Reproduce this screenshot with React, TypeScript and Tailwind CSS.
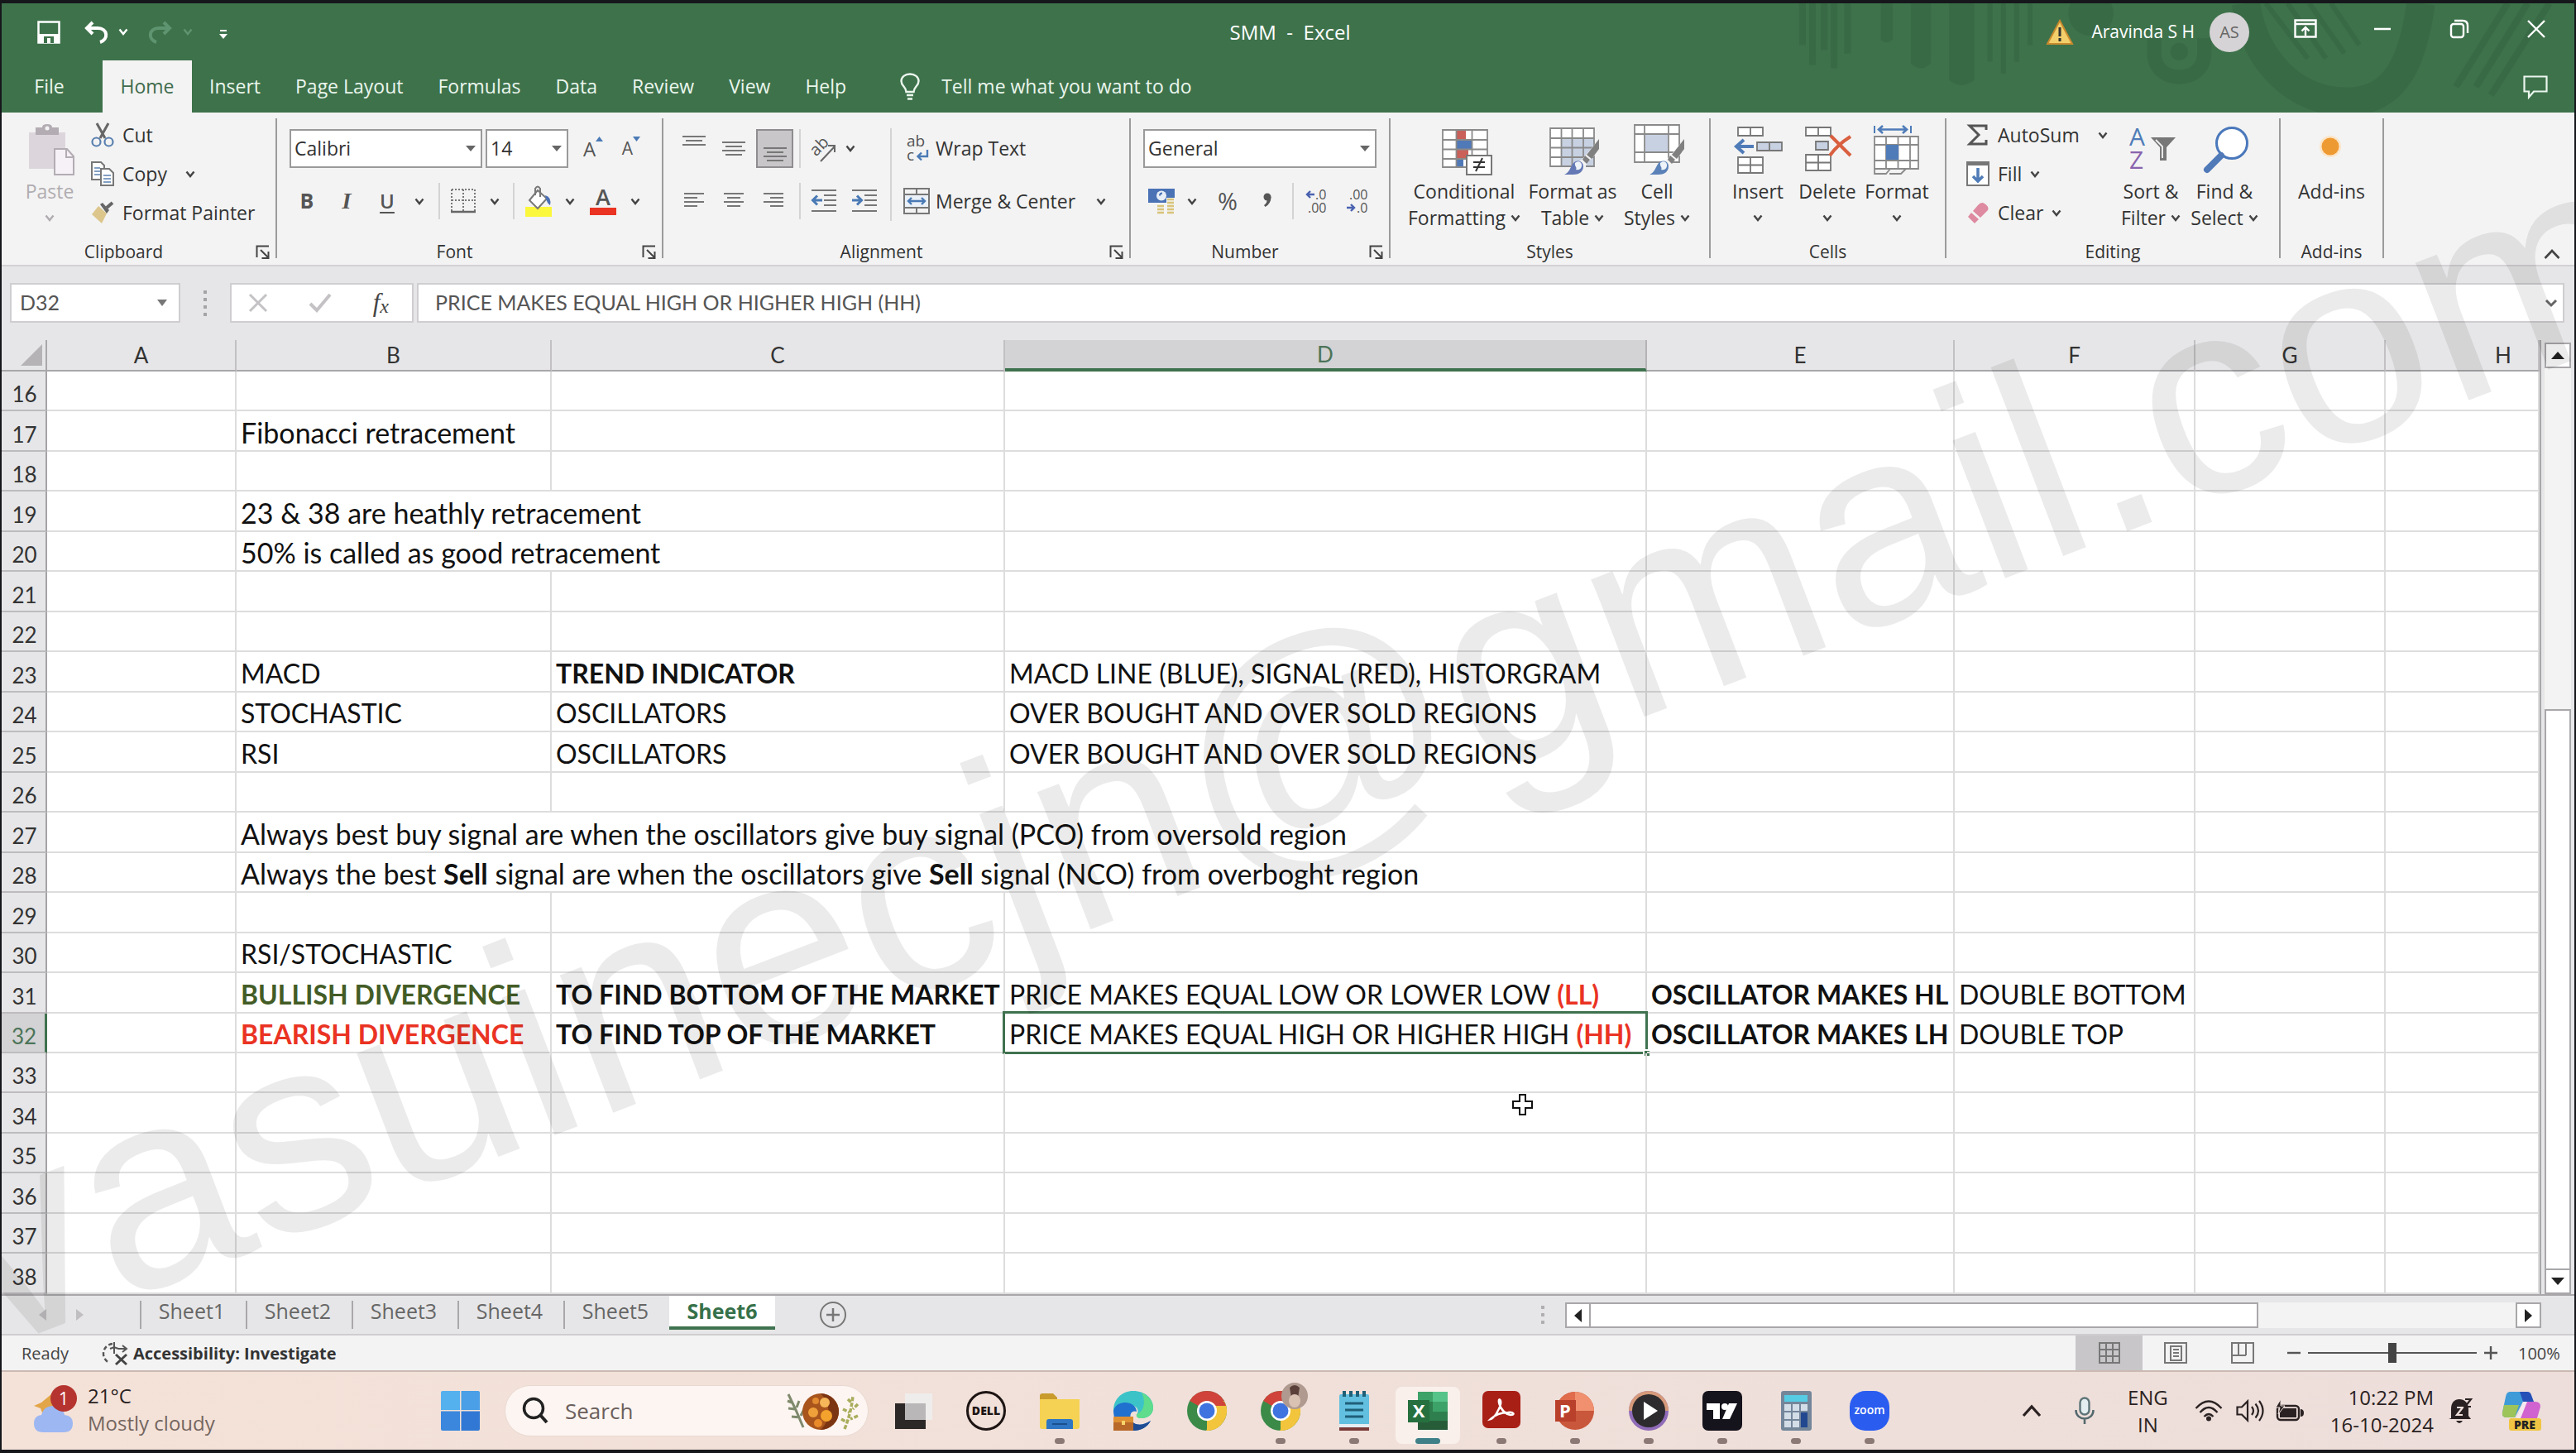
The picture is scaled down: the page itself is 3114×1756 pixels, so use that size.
import React from "react";
import type { ReactNode } from "react";

/* ---------- small shared pieces ---------- */

function Svg({ w, h, children, className }: { w: number; h: number; children: ReactNode; className?: string }) {
  return (
    <svg width={w} height={h} viewBox={`0 0 ${w} ${h}`} fill="none" aria-hidden="true" className={`shrink-0 overflow-visible ${className ?? ""}`}>
      {children}
    </svg>
  );
}

function Chevron({ className = "text-[#444]" }: { className?: string }) {
  return (
    <Svg w={12} h={9} className={className}>
      <path d="M1.500 1.500 6 7l4.500-5.500" stroke="currentColor" strokeWidth="2.400" />
    </Svg>
  );
}

function Btn({ label, className = "", children, pressed }: { label?: string; className?: string; children: ReactNode; pressed?: boolean }) {
  return (
    <button type="button" aria-label={label} aria-pressed={pressed} className={`flex shrink-0 items-center justify-center ${className}`}>
      {children}
    </button>
  );
}

function Sep({ className = "" }: { className?: string }) {
  return <div className={`w-[2px] shrink-0 bg-[#d4d4d4] ${className}`} />;
}

function Group({ title, className, launcher, children }: { title: string; className: string; launcher?: boolean; children: ReactNode }) {
  return (
    <>
      <section aria-label={title} className={`flex h-[177px] shrink-0 flex-col ${className}`}>
        <div className="flex min-h-0 flex-1">{children}</div>
        <div className={`relative flex h-8 items-center justify-center pt-0.5 text-[21px] text-[#333] ${launcher ? "pr-9" : ""}`}>
          {title}
          {launcher && (
            <button type="button" aria-label={`${title} settings`} className="absolute right-1.5 top-2">
              <Svg w={18} h={18}>
                <path d="M1.500 15V1.500H16M6 6l9 9M15.500 8v8H7.500" stroke="#444" strokeWidth="2" />
              </Svg>
            </button>
          )}
        </div>
      </section>
      <div className="h-[169px] w-[2px] shrink-0 bg-[#9b9b9b]" />
    </>
  );
}

function Big({ icon, line1, line2, chev, className, muted }: { icon: ReactNode; line1: string; line2?: string; chev?: boolean; className: string; muted?: boolean }) {
  return (
    <button type="button" className={`flex shrink-0 flex-col items-center whitespace-nowrap pt-1.5 leading-8 ${muted ? "text-[#b0acb0]" : ""} ${className}`}>
      <span className="mb-0.5 flex h-16 items-center justify-center">{icon}</span>
      <span>{line1}</span>
      <span className="flex h-8 items-center gap-1.5">
        {line2}
        {chev && <Chevron className={muted ? "text-[#b0acb0]" : "text-[#444]"} />}
      </span>
    </button>
  );
}

function Combo({ label, value, className }: { label: string; value: string; className: string }) {
  return (
    <label className={`relative block h-[47px] shrink-0 ${className}`}>
      <span className="sr-only">{label}</span>
      <select className="h-full w-full appearance-none border-2 border-[#9a9a9a] bg-white pl-1 text-[#333]" defaultValue={value}>
        <option>{value}</option>
      </select>
      <Svg w={12} h={7} className="pointer-events-none absolute right-2 top-5">
        <path d="M0 0h12L6 7z" fill="#666" />
      </Svg>
    </label>
  );
}

/* ---------- title bar and tabs ---------- */

function TitlePattern() {
  return (
    <svg aria-hidden="true" viewBox="0 0 960 131" preserveAspectRatio="xMaxYMin slice" className="pointer-events-none absolute right-0 top-0 h-full w-[960px]">
      <g fill="#376543" opacity="0.6">
        <path d="M30 0h8v50h-8zM42 0h8v74h-8zM56 0h8v56h-8zM68 0h8v78h-8zM84 0h8v60h-8zM128 0h14v44q-7 6-14 0zM164 0h24v72q-12 12-24 0zM210 0h30v92q-15 12-30 0zM256 0h6v70h-6zM272 0h6v84h-6zM288 0h6v70h-6zM304 0h6v50h-6z" />
        <circle cx="380" cy="12" r="27" />
      </g>
      <g stroke="#376543" fill="none" opacity="0.6">
        <path d="M456 42v18c0 38 60 38 60 0V42" strokeWidth="17" />
        <circle cx="486" cy="58" r="10" fill="#376543" />
        <path d="M566 0c10 70 60 118 120 118S766 70 776 0" strokeWidth="34" />
        <path d="M590 0l50 66M616 0l46 66M642 0l42 60M668 0l34 50" strokeWidth="6" />
        <path d="M880 0l-62 100M904 0l-62 100M930 0l-70 110" strokeWidth="8" />
      </g>
    </svg>
  );
}

function TitleBar() {
  return (
    <div className="relative flex h-[69px] items-center text-white">
      <div className="flex flex-1 items-center pl-[43px]">
        <Btn label="Save">
          <Svg w={28} h={28}>
            <path d="M1.500 1.500h25v25h-25z" stroke="#fff" strokeWidth="2.500" />
            <path d="M2 16h24v10H2z" fill="#fff" />
            <path d="M8 19h12v8H8z" fill="#3e724b" />
            <path d="M12 21h4v6h-4z" fill="#fff" />
          </Svg>
        </Btn>
        <Btn label="Undo" className="ml-7">
          <Svg w={30} h={26}>
            <path d="M11 1 4 8l7 7M5 8h12c13 0 13 14 3 17" stroke="#fff" strokeWidth="4" />
          </Svg>
        </Btn>
        <Btn label="Undo options" className="ml-3">
          <Chevron className="text-white" />
        </Btn>
        <Btn label="Redo" className="ml-6">
          <Svg w={30} h={26}>
            <path d="m19 1 7 7-7 7M25 8H13C0 8 0 22 10 25" stroke="#5f9470" strokeWidth="4" />
          </Svg>
        </Btn>
        <Btn label="Redo options" className="ml-3">
          <Chevron className="text-[#5f9470]" />
        </Btn>
        <Btn label="Customize Quick Access Toolbar" className="ml-8 mt-1.5">
          <Svg w={10} h={11}>
            <path d="M1 1h8" stroke="#fff" strokeWidth="2" />
            <path d="M0 5h10l-5 6z" fill="#fff" />
          </Svg>
        </Btn>
      </div>
      <h1 className="whitespace-pre pr-1 text-[24px]">SMM  -  Excel</h1>
      <div className="flex flex-1 items-center justify-end pr-[34px]">
        <Svg w={32} h={30}>
          <path d="M16 1 31 29H1z" fill="#f3cf6b" stroke="#c98a2e" strokeWidth="2" />
          <path d="M16 9v11M16 22v4" stroke="#333" strokeWidth="3" />
        </Svg>
        <span className="ml-[22px] text-[21px]">Aravinda S H</span>
        <Btn label="Account" className="ml-[18px] size-12 rounded-full bg-[#d5d3d5] text-[20px] text-[#666]">
          AS
        </Btn>
        <Btn label="Ribbon display options" className="mb-2 ml-[54px]">
          <Svg w={28} h={23}>
            <path d="M1.500 1.500h25v20h-25zM2 6h24M14 20v-9M9.500 14.500 14 10l4.500 4.500" stroke="#fff" strokeWidth="2.400" />
          </Svg>
        </Btn>
        <Btn label="Minimize" className="mb-2 ml-[68px]">
          <Svg w={22} h={24}>
            <path d="M1 12h20" stroke="#fff" strokeWidth="2.500" />
          </Svg>
        </Btn>
        <Btn label="Restore" className="mb-2 ml-[70px]">
          <Svg w={24} h={24}>
            <rect x="2" y="6" width="15" height="16" rx="3" stroke="#fff" strokeWidth="2.400" />
            <path d="M6 2h10q6 0 6 6v9" stroke="#fff" strokeWidth="2.400" />
          </Svg>
        </Btn>
        <Btn label="Close" className="mb-2 ml-[69px]">
          <Svg w={24} h={24}>
            <path d="m2 2 20 20M22 2 2 22" stroke="#fff" strokeWidth="2.400" />
          </Svg>
        </Btn>
      </div>
    </div>
  );
}

const MENU = ["Insert", "Page Layout", "Formulas", "Data", "Review", "View", "Help"];

function MenuTabs() {
  return (
    <nav aria-label="Ribbon tabs" className="relative flex h-[63px] items-stretch text-[23px] text-[#eaf6ed]">
      <button type="button" className="w-[115px] text-center">File</button>
      <button type="button" className="ml-[7px] w-[108px] bg-[#f3f3f3] text-[#3f6b4c]">Home</button>
      {MENU.map((m) => (
        <button key={m} type="button" className="whitespace-nowrap px-[21px]">
          {m}
        </button>
      ))}
      <label className="ml-11 flex items-center gap-[26px]">
        <Svg w={24} h={34}>
          <path d="M7.500 23c0-6-6-7-6-13C1.500 5 6 1.500 12 1.500S22.500 5 22.500 10c0 6-6 7-6 13zM8 27h8M9 31.500h6" stroke="#eaf6ed" strokeWidth="2.400" />
        </Svg>
        <input aria-label="Tell me what you want to do" placeholder="Tell me what you want to do" className="w-[400px] bg-transparent placeholder:text-[#eaf6ed] placeholder:opacity-100" />
      </label>
      <Btn label="Comments" className="ml-auto mr-8">
        <Svg w={30} h={28}>
          <path d="M1.500 1.500h27v18H13l-6 7v-7H1.500z" stroke="#eaf6ed" strokeWidth="2.200" />
        </Svg>
      </Btn>
    </nav>
  );
}

/* ---------- ribbon ---------- */

function Lines({ rows, top = 0 }: { rows: [number, number][]; top?: number }) {
  return (
    <Svg w={30} h={34}>
      {rows.map(([x, len], i) => (
        <path key={i} d={`M${x} ${top + 2 + i * 5}h${len}`} stroke="#777" strokeWidth="2" />
      ))}
    </Svg>
  );
}

function IndentIcon({ dir }: { dir: "in" | "out" }) {
  return (
    <Svg w={30} h={30}>
      <path d="M0 2h30M15 8h15M15 14h15M15 20h15M0 27h30" stroke="#777" strokeWidth="2" />
      <path d={dir === "out" ? "M13 14H2M7 8.500 1.500 14 7 19.500" : "M0 14h11M6 8.500 11.500 14 6 19.500"} stroke="#4a7ab5" strokeWidth="3" />
    </Svg>
  );
}

function Brush({ x, y, fill = "#5b82b8" }: { x: number; y: number; fill?: string }) {
  return (
    <g transform={`translate(${x} ${y})`}>
      <path d="M46-3 22 25l-8 4-14 17h17q11-3 10-14l3-5L46 12z" fill="#f3f3f3" />
      <path d="M43 0v12L34 24l-6-5z" fill="#808080" />
      <path d="m26 20 6 5-4 5-5-5z" fill="#808080" />
      <path d="M1 43c7-3 7-9 11-14 5-5 12-2 12 4 0 7-6 10-12 10z" fill={fill} />
      <path d="M14 29c4-4 9-1 8 4-1 4-4 5-7 4 2-3-2-4-1-8z" fill="#eef3f9" />
    </g>
  );
}

function ClipboardGroup() {
  return (
    <Group title="Clipboard" launcher className="w-[331px]">
      <Big
        muted
        chev
        line1="Paste"
        className="ml-5 w-[76px]"
        icon={
          <Svg w={56} h={62} className="ml-1">
            <path d="M1 10h44v44H1z" fill="#dcd6dc" />
            <path d="M9 4h8q0-4 6-4t6 4h8v9H9z" fill="#b3adb3" />
            <circle cx="23" cy="5" r="2.500" fill="#f3f3f3" />
            <path d="M32 30h15l8 9v22H32z" fill="#f6f1f6" stroke="#b3adb3" strokeWidth="2" />
            <path d="M46 30v10h9" stroke="#b3adb3" strokeWidth="2" />
          </Svg>
        }
      />
      <div className="flex flex-col gap-[7px]">
        <button type="button" className="ml-3 flex h-10 items-center gap-2.5">
          <Svg w={28} h={29}>
            <path d="M7 0 17 18M21 0 11 18" stroke="#666" strokeWidth="3" />
            <circle cx="6.500" cy="22.500" r="5" stroke="#5a80b0" strokeWidth="2.200" />
            <circle cx="21.500" cy="22.500" r="5" stroke="#5a80b0" strokeWidth="2.200" />
          </Svg>
          Cut
        </button>
        <button type="button" className="ml-3 flex h-10 items-center gap-2.5">
          <Svg w={28} h={30}>
            <path d="M1 1h11l4 4v17H1z" fill="#fff" stroke="#777" strokeWidth="2" />
            <path d="M4 8h7M4 12h7M4 16h7" stroke="#5a80b0" strokeWidth="1.600" />
            <path d="M12 9h10l5 5v15H12z" fill="#fff" stroke="#777" strokeWidth="2" />
            <path d="M15 17h9M15 21h9M15 25h9" stroke="#5a80b0" strokeWidth="1.600" />
          </Svg>
          Copy
          <span className="ml-3">
            <Chevron />
          </span>
        </button>
        <button type="button" className="ml-3 flex h-10 items-center gap-2.5 whitespace-nowrap">
          <Svg w={28} h={28}>
            <path d="m9 6 10 9-6 12L1 16z" fill="#dcc68c" />
            <path d="m11 4 3-2 8 9-3 4z" fill="#666" />
            <path d="M19 8 26 2" stroke="#666" strokeWidth="4" />
          </Svg>
          Format Painter
        </button>
      </div>
    </Group>
  );
}

function FontGroup() {
  return (
    <Group title="Font" launcher className="w-[465px]">
      <div className="flex flex-col gap-[18px] pt-[13px]">
        <div className="flex items-center pl-[15px]">
          <Combo label="Font" value="Calibri" className="w-[233px]" />
          <Combo label="Font size" value="14" className="ml-1 w-[100px]" />
          <Btn label="Increase font size" className="ml-1.5 w-12 text-[24px] text-[#555]">
            A
            <Svg w={9} h={6} className="mb-6">
              <path d="M0 6 4.500 0 9 6z" fill="#4a7ab5" />
            </Svg>
          </Btn>
          <Btn label="Decrease font size" className="w-11 text-[21px] text-[#555]">
            A
            <Svg w={9} h={6} className="mb-6">
              <path d="M0 0h9L4.500 6z" fill="#4a7ab5" />
            </Svg>
          </Btn>
        </div>
        <div className="flex h-11 items-stretch pl-[13px] text-[#555]">
          <Btn className="w-[46px] text-[25px] font-bold">B</Btn>
          <Btn className="w-[50px] font-['Liberation_Serif'] text-[28px] font-bold italic">I</Btn>
          <Btn className="w-12 text-[24px] font-semibold underline underline-offset-4">U</Btn>
          <Btn label="Underline options" className="w-[30px]"><Chevron /></Btn>
          <Sep className="ml-2" />
          <Btn label="Borders" className="w-14">
            <Svg w={30} h={30}>
              <path d="M1 1h28v26M1 1v26M15 1v26M1 14h28" stroke="#777" strokeWidth="2" strokeDasharray="2 2" />
              <path d="M0 28h30" stroke="#666" strokeWidth="2.500" />
            </Svg>
          </Btn>
          <Btn label="Border options" className="w-5"><Chevron /></Btn>
          <Sep className="ml-3" />
          <Btn label="Fill color" className="w-[58px]">
            <Svg w={34} h={38}>
              <path d="M1 26h32v12H1z" fill="#fbf73c" />
              <path d="m16 6 11 10-11 12L6 18z" fill="#fff" stroke="#777" strokeWidth="2" />
              <path d="M13 12V4q3-5 6 0v10" stroke="#777" strokeWidth="2" />
              <path d="M25 12q8 2 6 12-4-3-5-8z" fill="#4a6fb5" />
            </Svg>
          </Btn>
          <Btn label="Fill color options" className="w-[18px]"><Chevron /></Btn>
          <Btn label="Font color" className="w-[62px] flex-col">
            <span className="text-[27px] font-semibold leading-6">A</span>
            <span className="mt-px h-[9px] w-8 bg-[#ea3323]" />
          </Btn>
          <Btn label="Font color options" className="w-4"><Chevron /></Btn>
        </div>
      </div>
    </Group>
  );
}

function AlignmentGroup() {
  return (
    <Group title="Alignment" launcher className="w-[563px]">
      <div className="flex w-[274px] flex-col gap-[18px] pl-[13px] pt-[13px]">
        <div className="flex h-[47px]">
          <Btn label="Top align" className="w-12"><Lines rows={[[1, 28], [5, 20], [1, 28]]} /></Btn>
          <Btn label="Middle align" className="w-12"><Lines top={7} rows={[[1, 28], [5, 20], [1, 28], [5, 20]]} /></Btn>
          <Btn label="Bottom align" pressed className="ml-[3px] w-[45px] border-2 border-[#8f8d8f] bg-[#c8c6c8]"><Lines top={14} rows={[[1, 28], [5, 20], [1, 28], [5, 20]]} /></Btn>
          <Sep className="ml-[7px]" />
          <Btn label="Orientation" className="ml-[3px] w-[50px]">
            <Svg w={32} h={32}>
              <text x="3" y="23" transform="rotate(-45 8 20)" fontSize="20" fill="#555" fontFamily="Open Sans">ab</text>
              <path d="M12 31 29 13M21 12h8v8" stroke="#666" strokeWidth="2" />
            </Svg>
          </Btn>
          <Btn label="Orientation options" className="w-3.5"><Chevron /></Btn>
        </div>
        <div className="flex h-11">
          <Btn label="Align left" className="w-12"><Lines top={6} rows={[[3, 24], [3, 16], [3, 24], [3, 16]]} /></Btn>
          <Btn label="Center" className="w-12"><Lines top={6} rows={[[3, 24], [7, 16], [3, 24], [7, 16]]} /></Btn>
          <Btn label="Align right" className="w-12"><Lines top={6} rows={[[3, 24], [11, 16], [3, 24], [11, 16]]} /></Btn>
          <Sep className="ml-[7px]" />
          <Btn label="Decrease indent" className="ml-[3px] w-[50px]"><IndentIcon dir="out" /></Btn>
          <Btn label="Increase indent" className="w-12"><IndentIcon dir="in" /></Btn>
        </div>
      </div>
      <Sep className="mt-3 h-[112px]" />
      <div className="flex flex-col gap-[18px] pl-3.5 pt-[13px]">
        <button type="button" className="flex h-[47px] items-center gap-[7px] whitespace-nowrap">
          <Svg w={32} h={34}>
            <text x="4" y="14" fontSize="19" fill="#555" fontFamily="Open Sans">ab</text>
            <text x="4" y="31" fontSize="19" fill="#555" fontFamily="Open Sans">c</text>
            <path d="M29 18v8H18M22 21.500 17.500 26l4.500 4.500" stroke="#4a7ab5" strokeWidth="2.400" />
          </Svg>
          Wrap Text
        </button>
        <button type="button" className="flex h-11 items-center gap-[7px] whitespace-nowrap">
          <Svg w={32} h={32}>
            <path d="M1 1h30v30H1zM1 8h30M1 24h30M16 1v7M16 24v7" stroke="#777" strokeWidth="2" />
            <path d="M2 9h28v14H2z" fill="#eaf1f8" />
            <path d="M6 16h20M10 12l-4 4 4 4M22 12l4 4-4 4" stroke="#4a7ab5" strokeWidth="2.400" />
          </Svg>
          Merge &amp; Center
          <span className="ml-[18px]"><Chevron /></span>
        </button>
      </div>
    </Group>
  );
}

function NumberGroup() {
  return (
    <Group title="Number" launcher className="w-[312px]">
      <div className="flex flex-col gap-[18px] pt-[13px]">
        <Combo label="Number format" value="General" className="ml-[15px] w-[282px]" />
        <div className="flex h-11 pl-4 text-[#555]">
          <Btn label="Accounting number format" className="w-[42px]">
            <Svg w={32} h={32}>
              <path d="M0 1h32v17H0z" fill="#4a72b5" />
              <circle cx="16" cy="9.500" r="6" fill="#e8eef7" />
              <path d="M14 9.500q0-3 3-3" stroke="#4a72b5" strokeWidth="2" />
              <path d="M10 20h10v12H10zM22 12h10v20H22z" fill="#f3f3f3" />
              <path d="M11 22h8M11 26h8M11 30h8M23 14h8M23 18h8M23 22h8M23 26h8M23 30h8" stroke="#d8c47a" strokeWidth="2.600" />
            </Svg>
          </Btn>
          <Btn label="Accounting options" className="w-8"><Chevron /></Btn>
          <Btn label="Percent style" className="w-[54px] text-[29px]">%</Btn>
          <Btn label="Comma style" className="w-[42px]">
            <Svg w={12} h={20}>
              <circle cx="6" cy="5" r="4.500" fill="#555" />
              <path d="M10.500 5q0 8-7 12l-1.500-2q4-3 4-8z" fill="#555" />
            </Svg>
          </Btn>
          <Sep className="ml-[9px]" />
          <Btn label="Increase decimal" className="w-14">
            <Svg w={28} h={32}>
              <text x="12" y="14" fontSize="16" fill="#555" fontFamily="Open Sans">.0</text>
              <text x="3" y="30" fontSize="16" fill="#555" fontFamily="Open Sans">.00</text>
              <path d="M11 8H2M6 4 2 8l4 4" stroke="#4a62b0" strokeWidth="2.400" />
            </Svg>
          </Btn>
          <Btn label="Decrease decimal" className="w-[42px]">
            <Svg w={28} h={32}>
              <text x="4" y="14" fontSize="16" fill="#555" fontFamily="Open Sans">.00</text>
              <text x="13" y="30" fontSize="16" fill="#555" fontFamily="Open Sans">.0</text>
              <path d="M1 24h9M6 20l4 4-4 4" stroke="#4a62b0" strokeWidth="2.400" />
            </Svg>
          </Btn>
        </div>
      </div>
    </Group>
  );
}

function StylesGroup() {
  return (
    <Group title="Styles" className="w-[385px]">
      <Big
        chev
        line1="Conditional"
        line2="Formatting"
        className="ml-[19px] w-[140px]"
        icon={
          <Svg w={62} h={62} className="ml-1.5">
            <path d="M2 7h54v45H2z" fill="#fff" />
            <path d="M19 8h11v11H19zM19 31h14v11H19z" fill="#c9605a" />
            <path d="M19 20h18v10H19zM19 43h8v9h-8z" fill="#5079b8" />
            <path d="M2 7h54v45H2zM18.500 7v45M37.500 7v45M2 19h54M2 30.500h54M2 42h54" stroke="#8a8a8a" strokeWidth="1.800" />
            <path d="M31 38h30v23H31z" fill="#fff" stroke="#777" strokeWidth="2" />
            <path d="M39 46h14M39 52h14M50 41l-8 16" stroke="#333" strokeWidth="2" />
          </Svg>
        }
      />
      <Big
        chev
        line1="Format as"
        line2="Table"
        className="w-[122px]"
        icon={
          <Svg w={62} h={62} className="ml-1.5">
            <path d="M1 5h53v46H1z" fill="#fff" />
            <path d="M14 17h40v34H14z" fill="#c7d1e2" />
            <path d="M1 5h53v46H1zM14.500 5v46M27.500 5v46M41 5v46M1 17h53M1 28.500h53M1 40h53" stroke="#8a8a8a" strokeWidth="1.800" />
            <Brush x={17} y={18} fill="#6478b5" />
          </Svg>
        }
      />
      <Big
        chev
        line1="Cell"
        line2="Styles"
        className="w-[82px]"
        icon={
          <Svg w={62} h={62} className="ml-1.5">
            <path d="M1 1h54v45H1z" fill="#fff" />
            <path d="M1 1h54v45H1zM13 1v45M42 1v45M1 12h54M1 34h54" stroke="#8a8a8a" strokeWidth="1.800" />
            <path d="M14 13h27v20H14z" fill="#c7d1e2" />
            <Brush x={18} y={18} />
          </Svg>
        }
      />
    </Group>
  );
}

function CellsGroup() {
  return (
    <Group title="Cells" className="w-[283px]">
      <Big
        chev
        line1="Insert"
        className="ml-[15px] w-[84px]"
        icon={
          <Svg w={60} h={60}>
            <path d="M6 3h30v10H6zM21 3v10M6 39h30v19H6zM21 39v19M6 48.500h30" fill="#fff" stroke="#777" strokeWidth="1.800" />
            <path d="M29 21h30v10H29zM44 21v10" fill="#c7d1e2" stroke="#777" strokeWidth="1.800" />
            <path d="M25 26H5M13 18l-9 8 9 8" stroke="#4f7cb8" strokeWidth="4" />
          </Svg>
        }
      />
      <Big
        chev
        line1="Delete"
        className="w-[84px]"
        icon={
          <Svg w={60} h={60}>
            <path d="M4 3h30v10H4zM19 3v10M4 36h30v19H4zM19 36v19M4 45.500h30" fill="#fff" stroke="#777" strokeWidth="1.800" />
            <path d="M16 20h15v10H16z" fill="#c7d1e2" stroke="#777" strokeWidth="1.800" />
            <path d="M34 13q12 12 24 24M58 14Q42 24 33 37" stroke="#d95f3f" strokeWidth="4" />
          </Svg>
        }
      />
      <Big
        chev
        line1="Format"
        className="w-[84px]"
        icon={
          <Svg w={60} h={60}>
            <path d="M3 1v9M47 1v9" stroke="#4f7cb8" strokeWidth="2" />
            <path d="M8 5.500h34M13 1 8 5.500l5 4.500M37 1l5 4.500-5 4.500" stroke="#4f7cb8" strokeWidth="2.600" />
            <path d="M3 14h53v39H3z" fill="#fff" />
            <path d="M3 14h53v39H3zM17 14v39M31.500 14v39M46 14v39M3 24h53M3 43h53M3 53v6h14l5-6M21 59h14l6-6" stroke="#8a8a8a" strokeWidth="1.800" />
            <path d="M17 24h15v18H17z" fill="#4f7cb8" />
          </Svg>
        }
      />
    </Group>
  );
}

function EditingGroup() {
  return (
    <Group title="Editing" className="w-[402px]">
      <div className="flex w-[207px] flex-col gap-[7px] pl-6">
        <button type="button" className="flex h-10 items-center gap-2.5">
          <Svg w={28} h={28}>
            <path d="M24 8V3H4l11 11L4 25h20v-5" stroke="#555" strokeWidth="3" />
          </Svg>
          AutoSum
          <span className="ml-3"><Chevron /></span>
        </button>
        <button type="button" className="flex h-10 items-center gap-2.5">
          <Svg w={28} h={30}>
            <path d="M1 1h26v28H1z" fill="#fff" stroke="#777" strokeWidth="2" />
            <path d="M0 0h28v5H0z" fill="#777" />
            <path d="M14 8v16M8 18l6 6 6-6" stroke="#4f7cb8" strokeWidth="3.500" />
          </Svg>
          Fill
          <Chevron />
        </button>
        <button type="button" className="flex h-10 items-center gap-2.5">
          <Svg w={28} h={28}>
            <path d="M14 5q4-5 8-2 6 4 4 8L17 20 8 12z" fill="#de8aa0" />
            <path d="m6 14 9 8-5 5L2 19z" fill="#de8aa0" />
          </Svg>
          Clear
          <Chevron />
        </button>
      </div>
      <Big
        chev
        line1="Sort &"
        line2="Filter"
        className="w-20"
        icon={
          <Svg w={58} h={58} className="ml-1">
            <text x="1" y="24" fontSize="30" fill="#4f7cb8" fontFamily="Open Sans">A</text>
            <text x="1" y="52" fontSize="30" fill="#8a63ae" fontFamily="Open Sans">Z</text>
            <path d="M27 14h30L46 26v16h-8V26z" fill="#777" />
            <path d="m33 17 8 8v14" stroke="#f3f3f3" strokeWidth="1.800" />
          </Svg>
        }
      />
      <Big
        chev
        line1="Find &"
        line2="Select"
        className="w-[98px]"
        icon={
          <Svg w={58} h={58} className="ml-1">
            <circle cx="36" cy="21" r="18.500" fill="#fff" stroke="#4a78bb" strokeWidth="3" />
            <path d="M23 36 6 53" stroke="#5079b8" strokeWidth="8" strokeLinecap="round" />
          </Svg>
        }
      />
    </Group>
  );
}

function Ribbon() {
  return (
    <div className="flex items-start border-b-2 border-[#d3d1d4] bg-[#f3f3f3] pt-[7px] text-[23px] text-[#333]">
      <ClipboardGroup />
      <FontGroup />
      <AlignmentGroup />
      <NumberGroup />
      <StylesGroup />
      <CellsGroup />
      <EditingGroup />
      <Group title="Add-ins" className="w-[123px]">
        <Big
          line1="Add-ins"
          className="w-full"
          icon={
            <Svg w={32} h={32} className="mb-2">
              <circle cx="14" cy="16" r="13" fill="#fbe5c8" />
              <circle cx="14" cy="16" r="10.500" fill="#ee9a33" />
            </Svg>
          }
        />
      </Group>
      <Btn label="Collapse the ribbon" className="ml-auto mr-[17px] mt-[157px]">
        <Svg w={20} h={14}>
          <path d="m1.500 12 8.500-9 8.500 9" stroke="#444" strokeWidth="2.600" />
        </Svg>
      </Btn>
    </div>
  );
}

/* ---------- formula bar ---------- */

function FormulaBar() {
  return (
    <div className="flex items-stretch pb-[21px] pl-2.5 pr-3 pt-5 font-[Lato] text-[25px] text-[#555]">
      <div className="flex h-12 w-[206px] items-center border-2 border-[#cfcdd0] bg-white">
        <input aria-label="Name box" defaultValue="D32" className="w-0 flex-1 pl-2.5" />
        <Btn label="Named ranges" className="w-10">
          <Svg w={12} h={8}><path d="M0 0h12L6 8z" fill="#777" /></Svg>
        </Btn>
      </div>
      <div className="flex w-[60px] flex-col items-center justify-center gap-[5px]">
        {[0, 1, 2, 3].map((i) => <span key={i} className="size-1 bg-[#a5a3a6]" />)}
      </div>
      <div className="flex h-12 w-[222px] items-center justify-between border-2 border-[#cfcdd0] bg-white pl-5 pr-7">
        <Btn label="Cancel"><Svg w={24} h={24}><path d="m2 2 20 20M22 2 2 22" stroke="#c4c2c5" strokeWidth="3" /></Svg></Btn>
        <Btn label="Enter"><Svg w={28} h={24}><path d="m2 13 8 8L26 2" stroke="#c4c2c5" strokeWidth="4" /></Svg></Btn>
        <Btn label="Insert function" className="font-['Liberation_Serif'] text-[31px] italic text-[#444]">
          f<span className="mt-2 text-[24px]">x</span>
        </Btn>
      </div>
      <div className="ml-1 flex h-12 flex-1 items-center border-2 border-[#cfcdd0] bg-white">
        <input aria-label="Formula" defaultValue="PRICE MAKES EQUAL HIGH OR HIGHER HIGH (HH)" className="flex-1 pl-5" />
        <Btn label="Expand formula bar" className="w-7">
          <Svg w={16} h={10}><path d="m2 2 6 6 6-6" stroke="#666" strokeWidth="3" /></Svg>
        </Btn>
      </div>
    </div>
  );
}

/* ---------- sheet ---------- */

type Cell = { span?: number; text: ReactNode; prose?: boolean; bold?: boolean; color?: string; active?: boolean };

const LETTERS = ["A", "B", "C", "D", "E", "F", "G", "H"];

const Red = ({ children }: { children: ReactNode }) => <b className="text-[#ea3323]">{children}</b>;

const SHEET: Record<number, Record<string, Cell>> = {
  17: { B: { prose: true, text: "Fibonacci retracement" } },
  19: { B: { prose: true, span: 2, text: "23 & 38 are heathly retracement" } },
  20: { B: { prose: true, span: 2, text: "50% is called as good retracement" } },
  23: { B: { text: "MACD" }, C: { text: "TREND INDICATOR", bold: true }, D: { text: "MACD LINE (BLUE), SIGNAL (RED), HISTORGRAM" } },
  24: { B: { text: "STOCHASTIC" }, C: { text: "OSCILLATORS" }, D: { text: "OVER BOUGHT AND OVER SOLD REGIONS" } },
  25: { B: { text: "RSI" }, C: { text: "OSCILLATORS" }, D: { text: "OVER BOUGHT AND OVER SOLD REGIONS" } },
  27: { B: { prose: true, span: 3, text: "Always best buy signal are when the oscillators give buy signal (PCO) from oversold region" } },
  28: { B: { prose: true, span: 3, text: <>Always the best <b>Sell</b> signal are when the oscillators give <b>Sell</b> signal (NCO) from overboght region</> } },
  30: { B: { text: "RSI/STOCHASTIC" } },
  31: {
    B: { text: "BULLISH DIVERGENCE", bold: true, color: "text-[#435c26]" },
    C: { text: "TO FIND BOTTOM OF THE MARKET", bold: true },
    D: { text: <>PRICE MAKES EQUAL LOW OR LOWER LOW <Red>(LL)</Red></> },
    E: { text: "OSCILLATOR MAKES HL", bold: true },
    F: { text: "DOUBLE BOTTOM" },
  },
  32: {
    B: { text: "BEARISH DIVERGENCE", bold: true, color: "text-[#ea3323]" },
    C: { text: "TO FIND TOP OF THE MARKET", bold: true },
    D: { text: <>PRICE MAKES EQUAL HIGH OR HIGHER HIGH <Red>(HH)</Red></>, active: true },
    E: { text: "OSCILLATOR MAKES LH", bold: true },
    F: { text: "DOUBLE TOP" },
  },
};

function Row({ n }: { n: number }) {
  const cells: ReactNode[] = [];
  for (let i = 0; i < LETTERS.length; i++) {
    const key = LETTERS[i];
    const c = SHEET[n]?.[key];
    cells.push(
      <td
        key={key}
        colSpan={c?.span}
        className={`relative whitespace-nowrap border-b-2 border-r-2 border-[#dddddd] p-0 pb-px pl-[5px] align-bottom ${c?.prose ? "text-[34px]" : ""} ${c?.bold ? "font-bold" : ""} ${c?.color ?? "text-[#111]"}`}
      >
        {c?.text}
        {c?.active && (
          <span className="pointer-events-none absolute -bottom-[3px] -left-[3px] -right-[3px] -top-[3px] border-[3px] border-[#3f724f]">
            <span className="absolute -bottom-[5px] -right-[5px] size-2 border-l-2 border-t-2 border-white bg-[#3f724f]" />
          </span>
        )}
      </td>,
    );
    if (c?.span) i += c.span - 1;
  }
  const active = n === 32;
  return (
    <tr className="h-12">
      <th
        scope="row"
        className={`border-b-2 p-0 pl-0.5 align-bottom text-[26px] font-normal leading-[38px] ${active ? "border-r-[3px] border-b-[#bdbbbe] border-r-[#3f724f] bg-[#d3d2d4] text-[#4b7458]" : "border-r-2 border-b-[#bdbbbe] border-r-[#a5a3a6] bg-[#e6e6e8] text-[#333]"}`}
      >
        {n}
      </th>
      {cells}
    </tr>
  );
}

function Sheet() {
  const rows = Array.from({ length: 23 }, (_, i) => 16 + i);
  return (
    <div className="flex min-h-0 flex-1 border-b-2 border-[#a9a7aa]">
      <div className="relative min-w-0 flex-1 border-r-2 border-[#a9a7aa] bg-white">
        <table className="h-full w-full table-fixed border-separate border-spacing-0 font-[Lato] text-[32px] leading-10">
          <colgroup>
            <col className="w-[55px]" />
            <col className="w-[229px]" />
            <col className="w-[381px]" />
            <col className="w-[548px]" />
            <col className="w-[776px]" />
            <col className="w-[372px]" />
            <col className="w-[291px]" />
            <col className="w-[230px]" />
            <col />
          </colgroup>
          <thead>
            <tr className="h-[38px] text-[26px] leading-8 text-[#333]">
              <td className="border-b-2 border-r-2 border-[#a9a7aa] bg-[#e6e6e8] p-0">
                <Svg w={26} h={26} className="ml-auto mr-1">
                  <path d="M26 0v26H0z" fill="#b5b3b6" />
                </Svg>
              </td>
              {LETTERS.map((l) => (
                <th
                  key={l}
                  scope="col"
                  className={`p-0 font-normal ${l === "H" ? "pl-[100px]" : ""} ${l === "D" ? "border-b-4 border-r-2 border-b-[#3f724f] border-r-[#b5b3b6] bg-[#d3d2d4] text-[#4b7458]" : "border-b-2 border-r-2 border-b-[#a9a7aa] border-r-[#c2c0c3] bg-[#e6e6e8]"}`}
                >
                  {l}
                </th>
              ))}
            </tr>
          </thead>
          <tbody>
            {rows.map((n) => <Row key={n} n={n} />)}
          </tbody>
        </table>
      </div>
      <div className="ml-1 mr-1 flex w-8 flex-col pt-[3px]">
        <Btn label="Scroll up" className="h-[31px] border-2 border-[#a9a7aa] bg-white"><Svg w={16} h={9}><path d="M8 0l8 9H0z" fill="#222" /></Svg></Btn>
        <div className="flex-[415] bg-[#f3f3f3]" />
        <div className="flex-[679] border-2 border-[#a9a7aa] bg-white" />
        <Btn label="Scroll down" className="h-[29px] border-2 border-t-0 border-[#a9a7aa] bg-white"><Svg w={16} h={9}><path d="M0 0h16L8 9z" fill="#222" /></Svg></Btn>
      </div>
    </div>
  );
}

function SheetTabs() {
  return (
    <div className="flex h-12 items-start border-b-2 border-[#cfcdd0] text-[25px] text-[#666]">
      <div className="flex w-[167px] items-center gap-9 self-center pl-[45px]">
        <Btn label="Previous sheet"><Svg w={9} h={14}><path d="M9 0v14L0 7z" fill="#c0bec1" /></Svg></Btn>
        <Btn label="Next sheet"><Svg w={9} h={14}><path d="M0 0v14l9-7z" fill="#c0bec1" /></Svg></Btn>
      </div>
      {[1, 2, 3, 4, 5].map((n) => (
        <button key={n} type="button" className="mt-1.5 h-[34px] w-32 border-l-2 border-[#a9a7aa] pb-2.5 pr-1 leading-6">
          Sheet{n}
        </button>
      ))}
      <button type="button" className="h-[41px] w-32 border-b-4 border-[#3f724f] bg-white pb-0.5 font-bold leading-8 text-[#36714a]">Sheet6</button>
      <Btn label="New sheet" className="ml-[53px] h-[46px]">
        <Svg w={34} h={34}>
          <circle cx="17" cy="17" r="15" stroke="#777" strokeWidth="2" />
          <path d="M17 9v16M9 17h16" stroke="#777" strokeWidth="2.500" />
        </Svg>
      </Btn>
      <div className="ml-auto mr-[25px] flex h-[46px] items-center">
        <span aria-hidden="true" className="flex flex-col gap-[5px]">
          {[0, 1, 2].map((i) => <span key={i} className="size-1 bg-[#b0aeb1]" />)}
        </span>
      </div>
      <div className="mr-10 mt-2 flex h-[31px] w-[1180px]">
        <Btn label="Scroll left" className="w-[31px] border-2 border-[#a9a7aa] bg-white"><Svg w={9} h={16}><path d="M9 0v16L0 8z" fill="#222" /></Svg></Btn>
        <div className="flex-[806] border-y-2 border-r-2 border-[#a9a7aa] bg-white" />
        <div className="flex-[312] bg-[#f3f3f3]" />
        <Btn label="Scroll right" className="w-[31px] border-2 border-[#a9a7aa] bg-white"><Svg w={9} h={16}><path d="M0 0v16l9-8z" fill="#222" /></Svg></Btn>
      </div>
    </div>
  );
}

function StatusBar() {
  return (
    <div className="flex h-11 items-center border-b-2 border-[#cbb9b4] bg-[#f3f3f3] text-[20px] text-[#444]">
      <span className="pl-6 pt-0.5">Ready</span>
      <button type="button" className="ml-10 flex items-center gap-1 pt-0.5 font-bold text-[#333]">
        <Svg w={34} h={30}>
          <path d="M13 3C6 4 2 9 2 15c0 5 3 9 7 11" stroke="#555" strokeWidth="2.400" strokeDasharray="5 3" />
          <path d="M15 1v14M10 9l5-2 5 2M20 9h10M25 5l5 4-5 4" stroke="#555" strokeWidth="2" />
          <path d="m17 16 13 12M30 16 17 28" stroke="#444" strokeWidth="3" />
        </Svg>
        Accessibility: Investigate
      </button>
      <Btn label="Normal view" pressed className="ml-auto h-full w-[81px] bg-[#c8c6c9]">
        <Svg w={26} h={26}><path d="M1 1h24v24H1zM9 1v24M17 1v24M1 9h24M1 17h24" stroke="#777" strokeWidth="2" /></Svg>
      </Btn>
      <Btn label="Page layout view" className="w-20">
        <Svg w={28} h={26}><path d="M1 1h26v24H1zM8 5h13v17H8zM11 9h7M11 13h7M11 17h7" stroke="#777" strokeWidth="2" /></Svg>
      </Btn>
      <Btn label="Page break preview" className="w-[82px]">
        <Svg w={28} h={26}><path d="M1 1h26v24H1zM9 1v15M18 1v15M1 16h17" stroke="#777" strokeWidth="2" /></Svg>
      </Btn>
      <Btn label="Zoom out" className="ml-3"><Svg w={18} h={18}><path d="M1 9h16" stroke="#555" strokeWidth="2.400" /></Svg></Btn>
      <input
        type="range"
        aria-label="Zoom"
        defaultValue={50}
        className="mx-2 h-6 w-[204px] appearance-none bg-[linear-gradient(#555,#555)] bg-[length:100%_2px] bg-center bg-no-repeat [&::-webkit-slider-thumb]:h-6 [&::-webkit-slider-thumb]:w-2.5 [&::-webkit-slider-thumb]:appearance-none [&::-webkit-slider-thumb]:bg-[#444]"
      />
      <Btn label="Zoom in"><Svg w={18} h={18}><path d="M1 9h16M9 1v16" stroke="#555" strokeWidth="2.400" /></Svg></Btn>
      <span className="ml-6 w-[68px] pt-0.5">100%</span>
    </div>
  );
}

/* ---------- taskbar ---------- */

function Chrome() {
  return (
    <>
      <circle cx="24" cy="24" r="24" fill="#3b8a48" />
      <path d="M24 24 3.200 12A24 24 0 0 1 44.800 12z" fill="#d0433a" />
      <path d="M24 24 44.800 12A24 24 0 0 1 24 48z" fill="#f2c53d" />
      <path d="M24 13h21l2 5H30z" fill="#d0433a" />
      <path d="m34 30-11 18q8 0 14-4z" fill="#f2c53d" />
      <circle cx="24" cy="24" r="12" fill="#fff" />
      <circle cx="24" cy="24" r="9.500" fill="#3f73e0" />
    </>
  );
}

const APPS: { name: string; state?: "open" | "active"; icon: ReactNode }[] = [
  {
    name: "Task view",
    icon: (
      <>
        <path d="M3 15h37v31H3z" fill="#2d2828" />
        <path d="M15 3h33v32H15z" fill="#efeeee" opacity="0.85" />
        <path d="M15 15h25v20H15z" fill="#b9b7b7" />
      </>
    ),
  },
  {
    name: "Dell",
    icon: (
      <>
        <circle cx="24" cy="24" r="22.500" fill="none" stroke="#1d1514" strokeWidth="3" />
        <text x="24" y="29" textAnchor="middle" fontSize="14" fontWeight="800" fill="#1d1514" fontFamily="Open Sans">DELL</text>
      </>
    ),
  },
  {
    name: "File Explorer",
    state: "open",
    icon: (
      <>
        <path d="M0 6q0-3 3-3h13l5 5v8H0z" fill="#c99b2c" />
        <path d="M0 10h48v33q0 3-3 3H3q-3 0-3-3z" fill="#f5d154" />
        <path d="M8 37q0-3 3-3h26q3 0 3 3v9H8z" fill="#2e76c4" />
        <path d="M15 40h18" stroke="#1c4f8c" strokeWidth="2" />
      </>
    ),
  },
  {
    name: "Microsoft Edge",
    icon: (
      <>
        <path d="M0 24C0 10 10 0 24 0s24 9 24 20c0 8-6 13-14 13-6 0-7-3-5-6 2-4-1-9-7-9C12 18 4 24 4 32z" fill="#3cc3c8" />
        <path d="M34 2c9 4 14 11 14 18 0 8-6 13-14 13-5 0-7-2-6-5 8-2 12-14 6-26z" fill="#5fdc8c" />
        <path d="M0 24c2-9 12-12 20-9 5 2 8 6 8 10-5-2-9 2-7 9 2 8 13 9 24 2-4 8-12 12-21 12C10 48 0 38 0 24z" fill="#1f70cf" />
        <path d="M21 34c3 8 14 9 24 2-4 8-12 12-21 12z" fill="#1f4c93" />
        <path d="M0 31h24v17H0z" fill="#b8692a" />
        <path d="M0 31h24v7H0z" fill="#dd8f33" />
        <path d="M10 36h4v5h-4z" fill="#f8d46a" />
      </>
    ),
  },
  { name: "Google Chrome", icon: <Chrome /> },
  {
    name: "Google Chrome profile",
    state: "open",
    icon: (
      <>
        <Chrome />
        <circle cx="41" cy="6" r="16" fill="#b09a90" />
        <path d="M35-4q6-6 12 0l-2 12h-8z" fill="#5a4038" />
        <ellipse cx="41" cy="12" rx="7" ry="8" fill="#d9c2b2" />
      </>
    ),
  },
  {
    name: "Notepad",
    state: "open",
    icon: (
      <>
        <path d="M6 40h36v8H6z" fill="#7a3a38" />
        <path d="M6 38h36v6H6z" fill="#e4eef2" />
        <path d="M6 6q0-2 2-2h32q2 0 2 2v34H6z" fill="#62bfdf" />
        <path d="M12 0v7M20 0v7M28 0v7M36 0v7" stroke="#1f5f78" strokeWidth="4" />
        <path d="M13 15h22M13 23h22M13 31h22" stroke="#1f5f78" strokeWidth="3" />
      </>
    ),
  },
  {
    name: "Excel",
    state: "active",
    icon: (
      <>
        <path d="M12 1h36v46H12z" fill="#2f7f4e" />
        <path d="M12 1h18v12H12z" fill="#3da268" />
        <path d="M30 1h18v12H30z" fill="#56c389" />
        <path d="M30 13h18v12H30z" fill="#3da268" />
        <path d="M12 36h36v11H12z" fill="#275c39" />
        <path d="M0 11h26v27H0z" fill="#26703f" />
        <text x="13" y="32" textAnchor="middle" fontSize="22" fontWeight="700" fill="#fff" fontFamily="Open Sans">X</text>
      </>
    ),
  },
  {
    name: "Adobe Acrobat",
    state: "open",
    icon: (
      <>
        <rect x="1" y="0" width="46" height="45" rx="7" fill="#a81f16" />
        <path d="M11 34c4-1 10-10 12-18 1-6-3-8-2-2 2 9 8 14 14 15 6 0 4-4-3-3-8 0-15 2-21 8z" fill="none" stroke="#fff" strokeWidth="2.500" />
      </>
    ),
  },
  {
    name: "PowerPoint",
    state: "open",
    icon: (
      <>
        <circle cx="24" cy="24" r="23" fill="#c9573b" />
        <path d="M24 1a23 23 0 0 1 23 23H24z" fill="#f0906f" />
        <path d="M24 1A23 23 0 0 0 1 24h23z" fill="#e06c4c" />
        <path d="M0 11h25v26H0z" fill="#b9402a" />
        <text x="12" y="32" textAnchor="middle" fontSize="22" fontWeight="700" fill="#fff" fontFamily="Open Sans">P</text>
      </>
    ),
  },
  {
    name: "Media player",
    state: "open",
    icon: (
      <>
        <circle cx="24" cy="24" r="24" fill="#8f6bb8" />
        <path d="M0 24a24 24 0 0 1 48 0z" fill="#d69a7a" />
        <circle cx="24" cy="24" r="20" fill="#2d2b2d" />
        <path d="M18 13v22l17-11z" fill="#fff" />
      </>
    ),
  },
  {
    name: "TradingView",
    state: "open",
    icon: (
      <>
        <rect width="48" height="48" rx="7" fill="#15131c" />
        <path d="M5 15h16v19h-8V23H5zM32 15h10l-9 19H24z" fill="#fff" />
        <circle cx="27" cy="19" r="4" fill="#fff" />
      </>
    ),
  },
  {
    name: "Calculator",
    state: "open",
    icon: (
      <>
        <rect x="6" y="0" width="37" height="48" rx="3" fill="#74869a" />
        <path d="M10 5h28v8H10z" fill="#55cbe4" />
        <path d="M10 16h8v8h-8zM20 16h8v8h-8zM30 16h8v8h-8zM10 26h8v8h-8zM20 26h8v8h-8zM10 36h8v8h-8zM20 36h8v8h-8z" fill="#d3dde8" />
        <path d="M30 26h8v18h-8z" fill="#22488f" />
      </>
    ),
  },
  {
    name: "Zoom",
    state: "open",
    icon: (
      <>
        <rect width="48" height="48" rx="19" fill="#2a5cf0" />
        <text x="24" y="28" textAnchor="middle" fontSize="14" fontWeight="600" fill="#fff" fontFamily="Open Sans">zoom</text>
      </>
    ),
  },
];

function AppButton({ app }: { app: (typeof APPS)[number] }) {
  return (
    <button type="button" aria-label={app.name} className="flex h-full w-[89px] flex-col items-center pt-[18px]">
      <span className={`flex h-[69px] w-[78px] flex-col items-center justify-between rounded-lg pt-[5px] ${app.state === "active" ? "bg-[#faf0eb]" : ""}`}>
        <svg width="48" height="48" viewBox="0 0 48 48" aria-hidden="true" className="overflow-visible">{app.icon}</svg>
        {app.state && <span className={`h-[7px] rounded-full ${app.state === "active" ? "w-[30px] bg-[#3f8088]" : "w-3 bg-[#8a7975]"}`} />}
      </span>
    </button>
  );
}

function Taskbar() {
  return (
    <footer className="flex h-[94px] shrink-0 items-center bg-linear-to-r from-[#f4e2d8] to-[#eddedb] text-[24px] text-[#2a2222]">
      <button type="button" className="flex w-[531px] items-center gap-3.5 pb-1 pl-[38px] text-left">
        <Svg w={52} h={60}>
          <path d="m22 12 4 9 9 2-6 9-10 9-7-4-3-8-8-3 9-4z" fill="#e2a548" />
          <path d="M12 58q-11 0-11-11 0-9 9-10 3-11 14-11 12 0 14 11 10 1 10 10 0 11-11 11z" fill="#9db7f2" />
          <circle cx="37" cy="17" r="16" fill="#b5342f" />
          <text x="37" y="25" textAnchor="middle" fontSize="21" fill="#fff" fontFamily="Open Sans">1</text>
        </Svg>
        <span className="leading-[33px]">
          21°C
          <br />
          <span className="text-[#75665f]">Mostly cloudy</span>
        </span>
      </button>
      <Btn label="Start">
        <Svg w={47} h={48}>
          <path d="M0 2q0-2 2-2h21v23H0z" fill="#55b1ee" />
          <path d="M24.500 0H45q2 0 2 2v21H24.500z" fill="#4a9fe6" />
          <path d="M0 24.500h23V48H2q-2 0-2-2z" fill="#3a87dd" />
          <path d="M24.500 24.500H47V46q0 2-2 2H24.500z" fill="#3078d4" />
        </Svg>
      </Btn>
      <label className="ml-[30px] flex h-[62px] w-[440px] items-center rounded-full border border-[#ead9d1] bg-[#fdf5f2] pl-5 pr-2">
        <Svg w={32} h={32}>
          <circle cx="14" cy="13" r="11.500" stroke="#222" strokeWidth="3.500" />
          <path d="m22 21 8 9" stroke="#222" strokeWidth="4" />
        </Svg>
        <input aria-label="Search" placeholder="Search" className="w-0 flex-1 pl-5 text-[26px] placeholder:text-[#6b5f5c] placeholder:opacity-100" />
        <Svg w={92} h={52}>
          <path d="M4 6q10 20 18 40M8 16 3 14M12 24l-8-1M14 22l3-8M18 34l-10-1M19 32l4-8" stroke="#7f8a6c" strokeWidth="3" />
          <circle cx="43" cy="27" r="22" fill="#a8541c" />
          <path d="M43 5a22 22 0 0 1 0 44 30 30 0 0 0 0-44z" fill="#7c3512" />
          <circle cx="34" cy="28" r="6" fill="#f0a03a" />
          <circle cx="50" cy="32" r="7" fill="#f4a22e" />
          <circle cx="48" cy="16" r="6" fill="#f5b759" />
          <circle cx="37" cy="14" r="4" fill="#e28a30" />
          <circle cx="40" cy="41" r="5" fill="#e88a2a" />
          <path d="M72 48q8-20 10-40M76 12l4 4M88 18l-6 6M70 24l8 4M88 32l-9 4M68 36l7 4" stroke="#a8ad5c" strokeWidth="3.500" strokeDasharray="5 2" />
        </Svg>
      </label>
      <div className="ml-2 flex h-full">
        {APPS.map((a) => <AppButton key={a.name} app={a} />)}
      </div>
      <div className="ml-auto flex h-full items-center pr-10">
        <Btn label="Show hidden icons"><Svg w={24} h={16}><path d="m2 14 10-11 10 11" stroke="#2a2222" strokeWidth="3.200" /></Svg></Btn>
        <Btn label="Microphone" className="ml-10">
          <Svg w={24} h={34}>
            <rect x="6.500" y="1.500" width="11" height="20" rx="5.500" fill="#e4eef0" stroke="#5e7478" strokeWidth="2.400" />
            <path d="M1.500 16c0 14 21 14 21 0M12 27v6" stroke="#54696d" strokeWidth="2.600" />
          </Svg>
        </Btn>
        <button type="button" className="ml-10 text-center leading-[33px]">ENG<br />IN</button>
        <Btn label="Network" className="ml-8">
          <Svg w={34} h={26}>
            <path d="M1.500 10q15.500-17 31 0M6.500 15q10.500-12 21 0M11.500 20q5.500-6 11 0" stroke="#2a2222" strokeWidth="2.400" />
            <circle cx="17" cy="22.500" r="3" fill="#2a2222" />
          </Svg>
        </Btn>
        <Btn label="Volume" className="ml-4">
          <Svg w={34} h={28}>
            <path d="M1.500 9.500H7l7-7v23l-7-7H1.500zM19 9q4 5 0 10M23.500 5.500q7 8.500 0 17M28 2q9 12 0 24" stroke="#2a2222" strokeWidth="2.200" />
          </Svg>
        </Btn>
        <Btn label="Battery" className="ml-3.5">
          <Svg w={34} h={28}>
            <rect x="2" y="8" width="26" height="17" rx="4" stroke="#2a2222" strokeWidth="2.400" />
            <path d="M8 11h17v11H5v-6zM30 12q4 0 4 4.500T30 21z" fill="#2a2222" />
            <path d="M6 0 0 10h5l-2 8 8-10H6z" fill="#2a2222" stroke="#efe0dc" strokeWidth="1" />
          </Svg>
        </Btn>
        <button type="button" className="ml-8 text-right leading-[33px]">10:22 PM<br />16-10-2024</button>
        <Btn label="Notifications" className="ml-[18px]">
          <Svg w={28} h={32}>
            <path d="M3 25V14C3 6 7 2 13 2s11 4 11 12v8l3 4H0zM9 28h8q-4 6-8 0z" fill="#2a2222" />
            <path d="M10 12h7l-7 9h7" stroke="#f0e0dc" strokeWidth="2.200" />
            <path d="M20 2h7l-7 9h7" stroke="#2a2222" strokeWidth="2.200" />
          </Svg>
        </Btn>
        <Btn label="Copilot preview" className="ml-9">
          <Svg w={48} h={50}>
            <path d="M10 2h20q4 0 5 4l3 8H26L16 33H6q-6 0-5-6L5 8q1-6 5-6z" fill="#3f9bd8" />
            <path d="M3 18h18l-5 15H6q-6 0-5-6z" fill="#9cc45a" />
            <path d="M22 2h9q4 0 5 4l3 8H26z" fill="#2450b8" />
            <path d="M28 14h13q6 0 6 6l-4 14q-1 4-5 4H20z" fill="#d063cf" />
            <path d="m26 14-8 20h5l8-20z" fill="#f4e8f0" />
            <rect x="9" y="34" width="39" height="15" rx="3" fill="#f0c544" />
            <text x="28" y="47" textAnchor="middle" fontSize="14" fontWeight="800" fill="#222" fontFamily="Open Sans">PRE</text>
          </Svg>
        </Btn>
      </div>
    </footer>
  );
}

function Watermark() {
  return (
    <div aria-hidden="true" className="pointer-events-none absolute inset-0 flex items-center justify-center overflow-hidden pl-3 pt-13">
      <span className="-rotate-21 whitespace-nowrap font-['Liberation_Sans'] text-[337px] leading-none text-black/8">vasuinecjn@gmail.com</span>
    </div>
  );
}

export default function App() {
  return (
    <main className="relative flex h-screen flex-col overflow-hidden border-x-2 border-y-4 border-[#16171b] bg-[#e6e6e8] font-['Open_Sans',sans-serif]">
      <header className="relative bg-[#3e724b]">
        <TitlePattern />
        <TitleBar />
        <MenuTabs />
      </header>
      <Ribbon />
      <FormulaBar />
      <Sheet />
      <SheetTabs />
      <StatusBar />
      <Taskbar />
      <div aria-hidden="true" className="pointer-events-none absolute left-[1826px] top-[1317px]">
        <Svg w={26} h={28}>
          <path d="M9 2h7v8h8v8h-8v8H9v-8H1v-8h8z" fill="#fff" stroke="#111" strokeWidth="2" />
        </Svg>
      </div>
      <Watermark />
    </main>
  );
}
